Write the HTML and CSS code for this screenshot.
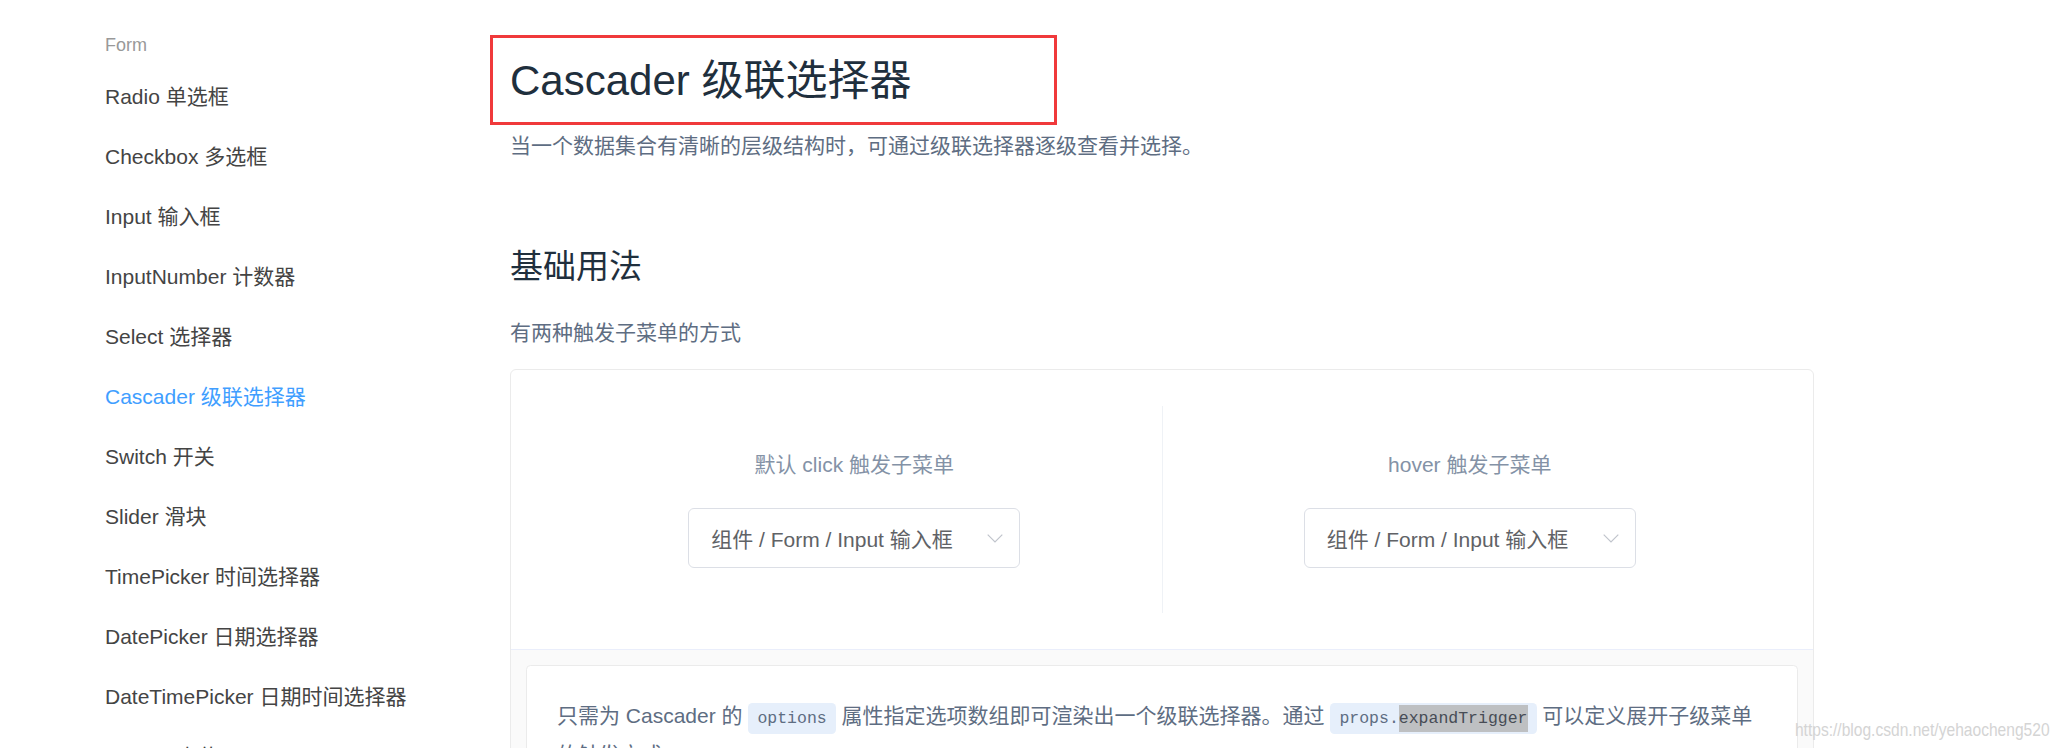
FILE: index.html
```html
<!DOCTYPE html>
<html lang="zh-CN">
<head>
<meta charset="utf-8">
<title>Cascader 级联选择器</title>
<link rel="stylesheet" href="styles.css">
</head>
<body>
<div class="page">
  <aside class="side-nav">
    <div class="nav-group-title">Form</div>
    <ul class="nav-list">
      <li class="nav-item">Radio 单选框</li>
      <li class="nav-item">Checkbox 多选框</li>
      <li class="nav-item">Input 输入框</li>
      <li class="nav-item">InputNumber 计数器</li>
      <li class="nav-item">Select 选择器</li>
      <li class="nav-item active">Cascader 级联选择器</li>
      <li class="nav-item">Switch 开关</li>
      <li class="nav-item">Slider 滑块</li>
      <li class="nav-item">TimePicker 时间选择器</li>
      <li class="nav-item">DatePicker 日期选择器</li>
      <li class="nav-item">DateTimePicker 日期时间选择器</li>
      <li class="nav-item">Upload 上传</li>
      <li class="nav-item">Rate 评分</li>
    </ul>
  </aside>
  <main class="content">
    <div class="title-wrap">
      <h2 class="page-title">Cascader 级联选择器</h2>
      <span class="mark-box"></span>
    </div>
    <p class="lead">当一个数据集合有清晰的层级结构时，可通过级联选择器逐级查看并选择。</p>
    <h3 class="section-title">基础用法</h3>
    <p class="section-desc">有两种触发子菜单的方式</p>
    <div class="demo-box">
      <div class="demo-source">
        <div class="demo-block divided">
          <span class="demonstration">默认 click 触发子菜单</span>
          <div class="cascader-input">
            <span class="input-text">组件 / Form / Input 输入框</span>
            <svg class="arrow" width="16" height="9" viewBox="0 0 16 9"><polyline points="0.7,0.7 8,8 15.3,0.7" fill="none" stroke="#c0c4cc" stroke-width="1.2"/></svg>
          </div>
        </div>
        <div class="demo-block">
          <span class="demonstration">hover 触发子菜单</span>
          <div class="cascader-input">
            <span class="input-text">组件 / Form / Input 输入框</span>
            <svg class="arrow" width="16" height="9" viewBox="0 0 16 9"><polyline points="0.7,0.7 8,8 15.3,0.7" fill="none" stroke="#c0c4cc" stroke-width="1.2"/></svg>
          </div>
        </div>
      </div>
      <div class="demo-meta">
        <div class="description">
          <p>只需为 Cascader 的 <code class="code">options</code> 属性指定选项数组即可渲染出一个级联选择器。通过 <code class="code">props.<span class="selected">expandTrigger</span></code> 可以定义展开子级菜单的触发方式。</p>
        </div>
      </div>
    </div>
  </main>
  <div class="watermark">https://blog.csdn.net/yehaocheng520</div>
</div>
</body>
</html>
```

FILE: styles.css
```css
* {
  box-sizing: border-box;
}

html,
body {
  margin: 0;
  padding: 0;
  background: #fff;
}

body {
  font-family: "Liberation Sans", "Noto Sans CJK SC", sans-serif;
  height: 748px;
  overflow: hidden;
}

.page {
  position: relative;
  display: flex;
  height: 748px;
  overflow: hidden;
}

/* ---------- side navigation ---------- */
.side-nav {
  flex: none;
  width: 510px;
  padding: 26px 0 0 105px;
}

.nav-group-title {
  font-size: 18px;
  line-height: 39px;
  color: #999;
  margin-bottom: 2px;
}

.nav-list {
  list-style: none;
  margin: 0;
  padding: 0;
}

.nav-item {
  font-size: 21px;
  line-height: 60px;
  color: #444;
  white-space: nowrap;
}

.nav-item.active {
  color: #409eff;
}

/* ---------- main content ---------- */
.content {
  flex: 1;
  min-width: 0;
  padding: 51px 248px 0 0;
}

.title-wrap {
  position: relative;
}

.page-title {
  margin: 0;
  font-size: 42px;
  line-height: 60px;
  font-weight: normal;
  color: #1f2f3d;
}

.mark-box {
  position: absolute;
  left: -20px;
  top: -16px;
  width: 567px;
  height: 90px;
  border: 3px solid #f0393b;
}

.lead {
  margin: 18px 0 0;
  font-size: 21px;
  line-height: 33px;
  color: #5e6d82;
}

.section-title {
  margin: 82px 0 0;
  font-size: 33px;
  line-height: 45px;
  font-weight: normal;
  color: #1f2f3d;
}

.section-desc {
  margin: 27px 0 20px;
  font-size: 21px;
  line-height: 33px;
  color: #5e6d82;
}

/* ---------- demo box ---------- */
.demo-box {
  border: 1px solid #ebebeb;
  border-radius: 6px;
}

.demo-source {
  display: flex;
  padding: 36px;
}

.demo-block {
  flex: 1 1 0;
  display: flex;
  flex-direction: column;
  align-items: center;
  padding: 45px 0;
}

.demo-block.divided {
  border-right: 1px solid #eff2f6;
}

.demonstration {
  display: block;
  font-size: 21px;
  line-height: 27px;
  color: #8492a6;
  margin-bottom: 30px;
}

.cascader-input {
  display: flex;
  align-items: center;
  justify-content: space-between;
  width: 332px;
  height: 60px;
  padding: 0 16px 0 22px;
  border: 1px solid #dcdfe6;
  border-radius: 6px;
  background: #fff;
  font-size: 21px;
  color: #606266;
}

.input-text {
  white-space: nowrap;
}

.arrow {
  display: block;
  flex: none;
}

.demo-meta {
  border-top: 1px solid #eaeefb;
  background: #fafafa;
  padding: 15px;
}

.description {
  background: #fff;
  border: 1px solid #ebebeb;
  border-radius: 4.5px;
  padding: 30px;
}

.description p {
  margin: 0;
  font-size: 21px;
  line-height: 39px;
  color: #5e6d82;
}

.code {
  display: inline-block;
  font-family: "Liberation Mono", "DejaVu Sans Mono", monospace;
  font-size: 16.5px;
  line-height: 27px;
  padding: 2px 9px;
  border-radius: 4.5px;
  background: #e6effb;
  color: #5e6d82;
}

.selected {
  display: inline-block;
  background: #bec0c2;
  color: #474c55;
}

/* ---------- watermark ---------- */
.watermark {
  position: absolute;
  top: 718px;
  right: 12px;
  font-size: 19px;
  line-height: 24px;
  color: #d4d4d4;
  white-space: nowrap;
  transform: scaleX(0.82);
  transform-origin: right center;
}
```
